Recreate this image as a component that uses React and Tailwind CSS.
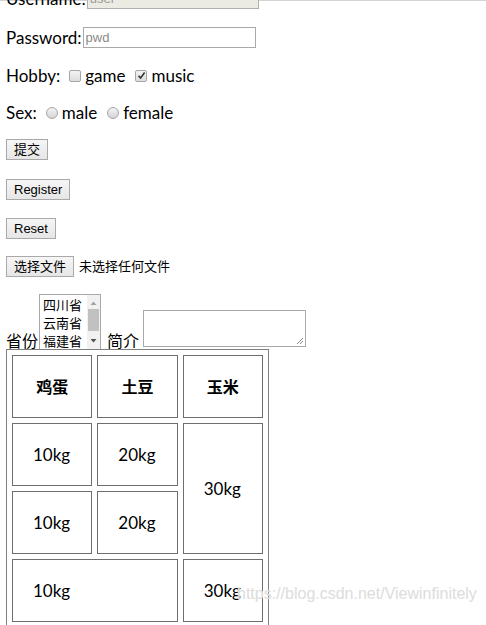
import React from "react";

// Small fake form controls that look like the old Chrome / Windows widgets
function Check({ checked }) {
  return (
    <span className="inline-flex h-[12px] w-[12px] items-center justify-center rounded-[2px] border border-[#a6a6a6] bg-gradient-to-b from-[#f4f4f4] to-[#dcdcdc]">
      {checked && (
        <svg width="9" height="9" viewBox="0 0 9 9">
          <path d="M1.5 4.8 L3.6 7 L7.6 1.6" fill="none" stroke="#333" strokeWidth="1.6" />
        </svg>
      )}
    </span>
  );
}

function Radio() {
  return (
    <span className="inline-block h-[12px] w-[12px] rounded-full border border-[#a6a6a6] bg-gradient-to-b from-[#f4f4f4] to-[#d4d4d4]" />
  );
}

function Btn({ children }) {
  return (
    <button className="h-[21px] border border-[#a9a9a9] bg-gradient-to-b from-[#f6f6f6] to-[#e6e6e6] px-[7px] text-[13px] leading-none text-black">
      {children}
    </button>
  );
}

export default function App() {
  const font = { fontFamily: 'Lato, "Noto Sans CJK SC", sans-serif' };
  const arial = { fontFamily: '"Liberation Sans", "Noto Sans CJK SC", sans-serif' };

  return (
    <div className="relative h-[625px] w-[486px] overflow-hidden bg-white text-[17px] text-black" style={font}>
      <div className="h-px bg-[#d4d4d4]" />

      <div className="-mt-[13px] flex flex-col pl-[6px]">
        {/* username */}
        <div className="flex h-[21px] items-center">
          <span>Username:</span>
          <div className="ml-px h-[21px] w-[172px] border border-[#b0b0b0] bg-[#ebebe4] pl-[2px] text-[13px] leading-[19px] text-[#999]" style={arial}>
            user
          </div>
        </div>

        {/* password */}
        <div className="mt-[18px] flex h-[21px] items-center">
          <span>Password:</span>
          <div className="ml-px h-[21px] w-[173px] border border-[#a9a9a9] bg-white pl-[2px] text-[13px] leading-[19px] text-[#8a8a8a]" style={arial}>
            pwd
          </div>
        </div>

        {/* hobby */}
        <div className="mt-[17px] flex h-[21px] items-center">
          <span>Hobby:</span>
          <span className="ml-[9px] flex"><Check /></span>
          <span className="ml-[4px]">game</span>
          <span className="ml-[10px] flex"><Check checked /></span>
          <span className="ml-[4px]">music</span>
        </div>

        {/* sex */}
        <div className="mt-[16px] flex h-[21px] items-center">
          <span>Sex:</span>
          <span className="ml-[9px] flex"><Radio /></span>
          <span className="ml-[4px]">male</span>
          <span className="ml-[10px] flex"><Radio /></span>
          <span className="ml-[4px]">female</span>
        </div>

        <div className="mt-[16px] flex">
          <Btn>提交</Btn>
        </div>
        <div className="mt-[19px] flex" style={arial}>
          <Btn>Register</Btn>
        </div>
        <div className="mt-[18px] flex" style={arial}>
          <Btn>Reset</Btn>
        </div>
        <div className="mt-[17px] flex items-center">
          <Btn>选择文件</Btn>
          <span className="ml-[5px] text-[13px]">未选择任何文件</span>
        </div>

        {/* province + intro */}
        <div className="mt-[17px] flex items-end text-[16px]">
          <span className="leading-[18px]">省份</span>
          <div className="ml-px flex h-[56px] w-[62px] border border-[#a9a9a9] bg-white">
            <div className="flex-1 pl-[3px] pt-px text-[13px] leading-[18px]">
              <div>四川省</div>
              <div>云南省</div>
              <div>福建省</div>
            </div>
            <div className="flex w-[13px] flex-col items-center bg-[#f1f1f1]">
              <svg width="7" height="14" viewBox="0 0 7 14"><path d="M0.5 10 L3.5 6.5 L6.5 10 Z" fill="#a3a3a3" /></svg>
              <div className="h-[22px] w-[11px] bg-[#c1c1c1]" />
              <div className="flex-1" />
              <svg width="7" height="14" viewBox="0 0 7 14"><path d="M0.5 4 L3.5 7.5 L6.5 4 Z" fill="#505050" /></svg>
            </div>
          </div>
          <span className="ml-[6px] leading-[18px]">简介</span>
          <div className="relative mb-[3px] ml-[4px] h-[37px] w-[163px] border border-[#a9a9a9] bg-white">
            <svg className="absolute bottom-px right-px" width="8" height="8" viewBox="0 0 8 8">
              <path d="M7 1 L1 7 M7 4 L4 7" stroke="#888" strokeWidth="1" />
            </svg>
          </div>
        </div>

        {/* table */}
        <table className="-mt-px w-[263px] border-separate border-spacing-[5px] border border-[#808080] text-[17px]">
          <thead>
            <tr>
              {["鸡蛋", "土豆", "玉米"].map((t) => (
                <th key={t} className="h-[63px] w-[80px] border border-[#6e6e6e] text-center text-[16px] font-bold">{t}</th>
              ))}
            </tr>
          </thead>
          <tbody>
            <tr>
              <td className="h-[63px] border border-[#6e6e6e] pl-[20px]">10kg</td>
              <td className="h-[63px] border border-[#6e6e6e] pl-[20px]">20kg</td>
              <td rowSpan={2} className="border border-[#6e6e6e] pl-[20px]">30kg</td>
            </tr>
            <tr>
              <td className="h-[63px] border border-[#6e6e6e] pl-[20px]">10kg</td>
              <td className="h-[63px] border border-[#6e6e6e] pl-[20px]">20kg</td>
            </tr>
            <tr>
              <td colSpan={2} className="h-[63px] border border-[#6e6e6e] pl-[20px]">10kg</td>
              <td className="h-[63px] border border-[#6e6e6e] pl-[20px]">30kg</td>
            </tr>
          </tbody>
        </table>
      </div>

      {/* watermark */}
      <div className="absolute left-[237px] top-[582px] text-[16px] text-[#dedede] [text-shadow:0_0_1px_#f6f6f6]" style={arial}>
        https://blog.csdn.net/Viewinfinitely
      </div>
    </div>
  );
}
